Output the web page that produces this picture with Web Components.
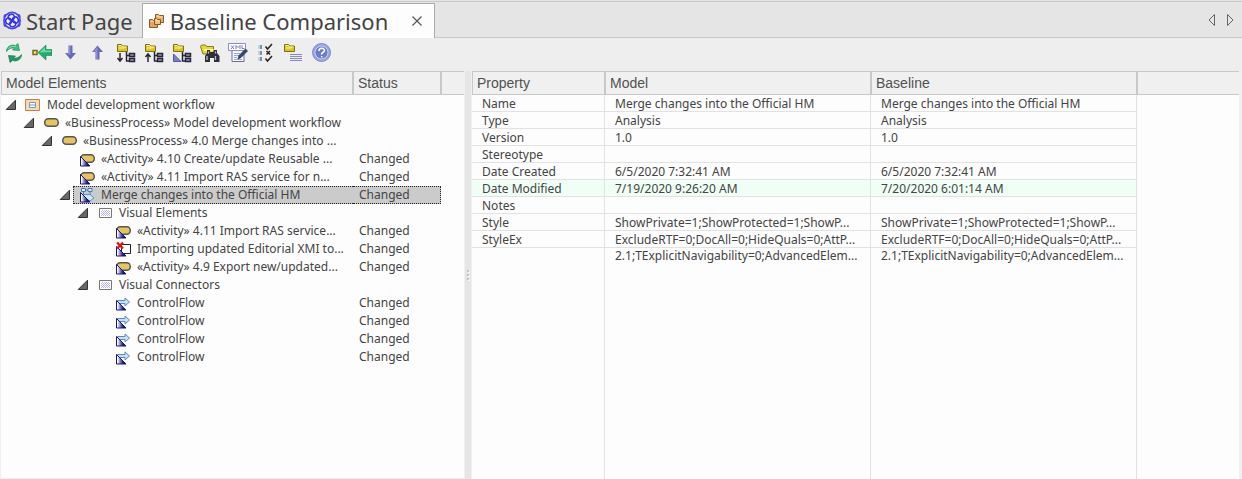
<!DOCTYPE html>
<html lang="en">
<head>
<meta charset="utf-8">
<title>Baseline Comparison</title>
<style>
  html, body { height: 100%; margin: 0; }
  body { background: #f0f0f0; color: #444; font: 12px/16px "Noto Sans", "Open Sans", sans-serif; }
</style>
</head>
<body>
<baseline-app></baseline-app>

<script>
const triangleBadge = `
  <defs><linearGradient id="fade"><stop offset=".1" stop-color="#fff"/><stop offset=".35" stop-color="#8f8fc8"/><stop offset=".7" stop-color="#16167a"/></linearGradient></defs>
  <path d="M1.500 5.500v9.500H11z" fill="url(#fade)" stroke="#16167a"/>`;
const pill = `<rect x="1.750" y="3.750" width="13.500" height="7.500" rx="3.500" fill="#e8c45c" stroke="#555" stroke-width="1.500"/>`;
const folder = `
  <path d="M1.500 1.500h4l1 1.500h5v5.500h-10z" fill="#dcc420" stroke="#7c7013"/>
  <path d="M2.500 2.500h3l1 1.500h4M2.500 5h6" fill="none" stroke="#fff59c"/>`;
const branches = `
  <path d="M10.500 9v9.500M10 12.500h4M10 18h4" fill="none" stroke="#25253a" stroke-width="1.500"/>
  <path d="M13.500 10.500h5v3h-5zM13.500 15.500h5v3h-5z" fill="#9a9aa8" stroke="#25253a" stroke-width="1.500"/>`;

const ICONS = {
  refresh: [20, `
    <path d="M2.500 8.500C2.500 4 6.500 1 11.500 2.500L14 .500 15.500 7.500 8.500 7l2-2C7.500 4.500 5 5.500 2.500 8.500z" fill="#3fbd7c" stroke="#168050" stroke-width=".6"/>
    <path d="M17.500 11.500C17.500 16 13.500 19 8.500 17.500L6 19.500 4.500 12.500 11.500 13l-2 2C12.500 15.500 15 14.500 17.500 11.500z" fill="#239a68" stroke="#0c6847" stroke-width=".6"/>
    <path d="M4.500 5.500C6.500 3.500 9 3 12 3.500" fill="none" stroke="#8be8b0"/>`],
  compare: [20, `
    <path d="M1 7.500h4v4H1z" fill="#f4ec7a" stroke="#77691a" stroke-width="1.500"/>
    <path d="M6 9.500L14 2v4.500h6v6h-6V17z" fill="#1fae6c" stroke="#15835a" stroke-width=".6"/>
    <path d="M7.500 9.500L13 4v3.500h6v1.500z" fill="#66dfa0"/>`],
  next: [20, `<path d="M8.500 2.500h4V10h3.500l-5.500 6.500L5 10h3.500z" fill="#6868b4"/><path d="M9 3h1.500v9L6 10.500h3z" fill="#8f8fd6"/>`],
  previous: [20, `<path d="M7.500 16.500h4V9H15L9.500 2.500 4 9h3.500z" fill="#6868b4"/><path d="M8 16h1.500V4L5 8.500h3z" fill="#8f8fd6"/>`],
  expandDown: [20, folder + branches + `<path d="M4 10v8M1.500 15L4 18l2.500-3" fill="none" stroke="#25253a" stroke-width="1.500"/>`],
  expandUp: [20, folder + branches + `<path d="M4 19v-8M1.500 14L4 11l2.500 3" fill="none" stroke="#25253a" stroke-width="1.500"/>`],
  expandChanged: [20, folder + branches + `<path d="M1.500 11v7.500H9z" fill="#8080c0" stroke="#5757a8"/>`],
  find: [20, `
    <path d="M.5 3.500l1-1.500h4l1 1.500h7V11H3z" fill="#e6d73b" stroke="#867a1c"/>
    <path d="M3.500 6h10v2h-9z" fill="#fff49b"/>
    <path d="M7 7h3v2h4V7h3v3l2.500 3v6h-5.500v-4h-4v4H5v-6l2-3z" fill="#30303d"/>
    <path d="M7 13v4M15.500 13v4M8.500 8.500v2M15.500 8.500v2" stroke="#c0c0d0" stroke-width="1.300"/>`],
  xml: [20, `
    <path d="M4 7h12v11.500H4z" fill="#f6f6ff" stroke="#6a6aa5"/>
    <path d="M.5.500h17v7H.500z" fill="#fff" stroke="#8c8cc4"/>
    <path d="M3 2.500l3 3.500m0-3.500L3 6M8 6V2.500l2 2 2-2V6M14 2v3.500h2.500" fill="none" stroke="#777bb5"/>
    <path d="M6 10.500h6M6 12.500h5M6 14.500h3M6 16.500h8" stroke="#9aa9d8"/>
    <path d="M10 16l1-3.500L17.500 6l2 2L13 14.500z" fill="#384679" stroke="#1e2648" stroke-width=".7"/>`],
  options: [20, `
    <path d="M2 2h4v4H2zM2 8h4v4H2zM2 14h4v4H2z" fill="#78909f"/><path d="M2 2h2v4H2zM2 8h2v4H2zM2 14h2v4H2z" fill="#b9d7e4"/>
    <path d="M9.500 3.500L11.500 6 16 1M9.500 15.500l2 2.500L16 13M10.500 8l3.500 3.500m0-3.500l-3.500 3.500" fill="none" stroke="#222" stroke-width="1.500"/>`],
  log: [20, `
    <path d="M.5 1.500h4l1 1.500h5v5.500H.5z" fill="#dcc420" stroke="#7c7013"/><path d="M1.500 2.500h3l1 1.500h4M1.500 5h6" fill="none" stroke="#fff59c"/>
    <path d="M6 11.500h12M6 13.500h12M6 15.500h12M6 17.500h12" stroke="#8787c5"/>`],
  help: [20, `
    <circle cx="9.500" cy="9.500" r="9" fill="#9aa4dd" stroke="#7e8bcc"/><circle cx="9.500" cy="9.500" r="6.500" fill="#6f7cc8" stroke="#c4cdf6"/>
    <path d="M7 8c0-3.500 5.500-3.500 5.500-.5 0 2-3 1.500-3 4" fill="none" stroke="#fff" stroke-width="1.500"/><path d="M9 13h1.500v1.500H9z" fill="#fff"/>`],
  start: [20, `
    <g fill="#4444f2"><circle cx="10" cy="9.500" r="9"/><circle cx="4" cy="5.500" r="2.500"/><circle cx="16" cy="5.500" r="2.500"/><circle cx="4" cy="13.500" r="2.500"/><circle cx="16" cy="13.500" r="2.500"/></g>
    <circle cx="10" cy="9.500" r="7.200" fill="#f4f4ff"/>
    <g fill="none" stroke="#3030ee" stroke-width="1.500">
      <path d="M10 9.500C5.500 9 5 4.500 8.500 3.500s6 3 1.500 6z"/><path d="M10 9.500C10.700 5.200 15.200 4.700 16.200 8.200s-3 6-6.200 1.300z"/>
      <path d="M10 9.500c4.500.7 5 5 1.500 6s-6-3-1.500-6z"/><path d="M10 9.500C9.300 14 4.800 14.500 3.800 11s3-6 6.200-1.500z"/>
    </g>`],
  baseline: [16, `
    <path d="M6.500 1.500h3l1 1h4v7h-8z" fill="#e5b26f" stroke="#8f5820"/><path d="M7.500 3h2l1 1h3" fill="none" stroke="#fde2b4"/>
    <path d="M.5 6.500h3l1 1h4v7h-8z" fill="#dfa660" stroke="#8f5820"/><path d="M1.500 8h2l1 1h3" fill="none" stroke="#fde2b4"/>
    <path d="M5.500 5.500h2l1 1h3v5h-6z" fill="#eec083" stroke="#8f5820"/><path d="M6.500 7h1l1 1h2" fill="none" stroke="#fde2b4"/>`],
  close: [12, `<path d="M1.500 1.500l9 9m0-9l-9 9" stroke="#555" stroke-width="1.200"/>`],
  left: [12, `<path d="M8.500.500v11L3 6z" fill="none" stroke="#666"/>`],
  right: [12, `<path d="M3.500.500v11L9 6z" fill="none" stroke="#666"/>`],
  toggle: [12, `<path d="M10.500 1.200V10.500H1.200z" fill="#686868" stroke="#333"/>`],
  diagram: [16, `<path d="M.5 2.500h14v11H.5z" fill="#fbd9b5" stroke="#bd8450"/><path d="M4.500 5.500h6v5h-6zM4.500 8h6" fill="#fff" stroke="#6f9cc0"/>`],
  pill: [16, pill],
  activity: [16, pill + triangleBadge],
  workflow: [16, `
    <path d="M2.500 1.500h4v3h-4zM9 1.500h4v3H9zM6.500 3H9M4.500 4.500v3M11 4.500v3" fill="#d8ecff" stroke="#4c74b8"/>
    <path d="M4 7.500h7l4 3.500-4 3-7-4z" fill="#cfe8ff" stroke="#5a8fd0"/>` + triangleBadge],
  group: [16, `
    <defs><pattern id="dots" width="2" height="2" patternUnits="userSpaceOnUse"><path d="M0 0h1v1H0zM1 1h1v1H1z" fill="#b9b9dc"/></pattern></defs>
    <path d="M2.500 3.500h12v9h-12z" fill="#fff" stroke="#777"/><path d="M4 5h9v6H4z" fill="url(#dots)"/>`],
  removed: [16, `<path d="M6.500 3.500h9v9h-9z" fill="#fff" stroke="#222"/>` + triangleBadge + `<path d="M2 1.500l6 6m0-6l-6 6" stroke="#d81919" stroke-width="2.400"/>`],
  flow: [16, `<path d="M2.500 5.500H10v-2.500L14.500 7l-4.500 4V8.500H2.500z" fill="#c4e0f8" stroke="#5d89bd"/>` + triangleBadge],
};

class UiIcon extends HTMLElement {
  connectedCallback() {
    const [size, art] = ICONS[this.getAttribute('name')];
    this.attachShadow({ mode: 'open' }).innerHTML = `
      <style>:host { display: block; flex: none; } svg { display: block; }</style>
      <svg width="${size}" height="${size}" viewBox="0 0 ${size} ${size}" aria-hidden="true">${art}</svg>`;
  }
}
customElements.define('ui-icon', UiIcon);

class TabItem extends HTMLElement {
  connectedCallback() {
    const active = this.hasAttribute('active');
    this.attachShadow({ mode: 'open' }).innerHTML = `
      <style>
        :host { display: flex; align-items: center; box-sizing: border-box; height: 35px; border: 1px solid transparent; border-bottom: 0; }
        :host([active]) { background: #fdfdfd; border-color: #aaa; padding: 0 3px 0 0; }
        button { display: flex; align-items: center; gap: 4px; border: 0; margin: 0; padding: 0 8px 0 1px; background: none; color: inherit; font: inherit; }
        :host([active]) .tab { padding: 0 15px 0 6px; gap: 5px; }
        :host([active]) .close { padding: 8px; }
      </style>
      <button class="tab" role="tab" aria-selected="${active}"><ui-icon name="${this.getAttribute('icon')}"></ui-icon><span><slot></slot></span></button>
      ${active ? '<button class="close" aria-label="Close tab"><ui-icon name="close"></ui-icon></button>' : ''}`;
  }
}
customElements.define('tab-item', TabItem);

class TabStrip extends HTMLElement {
  connectedCallback() {
    this.attachShadow({ mode: 'open' }).innerHTML = `
      <style>
        :host { display: flex; align-items: flex-end; box-sizing: border-box; height: 38px; background: linear-gradient(#c8c8c8, #c8c8c8) 0 100% / 100% 1px no-repeat, linear-gradient(#c8c8c8, #c8c8c8) 0 1px / 100% 1px no-repeat, #e5e5e5; font-size: 22px; line-height: 32px; }
        nav { display: flex; gap: 6px; margin-left: auto; padding: 0 6px 12px 0; }
        button { border: 0; margin: 0; padding: 0; background: none; }
      </style>
      <slot></slot>
      <nav aria-label="Scroll tabs"><button aria-label="Previous tab"><ui-icon name="left"></ui-icon></button><button aria-label="Next tab"><ui-icon name="right"></ui-icon></button></nav>`;
  }
}
customElements.define('tab-strip', TabStrip);

class ToolBar extends HTMLElement {
  connectedCallback() {
    const tools = { refresh: 'Refresh', compare: 'Merge from baseline', next: 'Next change', previous: 'Previous change', expandDown: 'Expand all', expandUp: 'Collapse all', expandChanged: 'Expand changed', find: 'Find in project', xml: 'Log to XML', options: 'Compare options', log: 'View log', help: 'Help' };
    this.attachShadow({ mode: 'open' }).innerHTML = `
      <style>
        :host { display: flex; box-sizing: border-box; height: 33px; padding-top: 5px; background: #eee; }
        button { display: block; border: 0; margin: 0; padding: 0 4px; height: 20px; background: none; }
      </style>
      ${Object.entries(tools).map(([icon, label]) => `<button aria-label="${label}"><ui-icon name="${icon}"></ui-icon></button>`).join('')}`;
  }
}
customElements.define('tool-bar', ToolBar);

const TABLE_STYLE = `
  table { width: 100%; table-layout: fixed; border-collapse: separate; border-spacing: 0; }
  th { box-sizing: border-box; height: 24px; padding: 0 4px; border: 1px solid #c8c8c8; background: #f0f0f0; color: #505050; text-align: left; font: 14px/20px "Liberation Sans", Arial, sans-serif; }
  th:last-child { border-right: 0; }
  td { box-sizing: border-box; padding: 0; white-space: nowrap; overflow: hidden; }`;

class ModelTree extends HTMLElement {
  connectedCallback() {
    const C = 'Changed';
    const rows = [
      [0, 'diagram', 'Model development workflow', '', 1],
      [1, 'pill', '«BusinessProcess» Model development workflow', '', 1],
      [2, 'pill', '«BusinessProcess» 4.0 Merge changes into ...', '', 1],
      [3, 'activity', '«Activity» 4.10 Create/update Reusable ...', C],
      [3, 'activity', '«Activity» 4.11 Import RAS service for n...', C],
      [3, 'workflow', 'Merge changes into the Official HM', C, 1, 1],
      [4, 'group', 'Visual Elements', '', 1],
      [5, 'activity', '«Activity» 4.11 Import RAS service...', C],
      [5, 'removed', 'Importing updated Editorial XMI to...', C],
      [5, 'activity', '«Activity» 4.9 Export new/updated...', C],
      [4, 'group', 'Visual Connectors', '', 1],
      [5, 'flow', 'ControlFlow', C], [5, 'flow', 'ControlFlow', C], [5, 'flow', 'ControlFlow', C], [5, 'flow', 'ControlFlow', C],
    ];
    this.attachShadow({ mode: 'open' }).innerHTML = `
      <style>
        :host { display: block; box-sizing: border-box; background: #fdfdfd; border-bottom: 1px solid #eee; overflow: hidden; }
        ${TABLE_STYLE}
        .name { width: 352px; } .status { width: 88px; }
        tbody::before { content: ""; display: table-row; height: 1px; }
        td { height: 18px; line-height: 16px; }
        td + td { padding-left: 6px; }
        .node { display: flex; gap: 2px; height: 18px; align-items: center; padding-left: calc(4px + 18px * var(--level)); }
        .toggle { flex: none; width: 12px; height: 12px; border: 0; margin: 0; padding: 0; background: none; }
        .label { display: flex; flex: 1; align-items: center; gap: 6px; height: 16px; padding-left: 5px; border: 1px solid transparent; border-right: 0; }
        .selected .label { background: #cbcbcb; border: 1px dotted #222; border-right: 0; }
        .selected .state { background: #cbcbcb; border: 1px dotted #222; border-left: 0; }
      </style>
      <table role="treegrid">
        <colgroup><col class="name"><col class="status"><col></colgroup>
        <thead><tr><th>Model Elements</th><th>Status</th><th></th></tr></thead>
        <tbody>${rows.map(([level, icon, text, status, open, selected]) => `
          <tr aria-level="${level + 1}"${selected ? ' class="selected" aria-selected="true"' : ''}>
            <td><div class="node" style="--level:${level}">${open ? '<button class="toggle" aria-label="Collapse"><ui-icon name="toggle"></ui-icon></button>' : '<span class="toggle"></span>'}<div class="label"><ui-icon name="${icon}"></ui-icon><span>${text}</span></div></div></td>
            <td class="state">${status}</td><td></td>
          </tr>`).join('')}
        </tbody>
      </table>`;
  }
}
customElements.define('model-tree', ModelTree);

class SplitBar extends HTMLElement {
  connectedCallback() {
    this.attachShadow({ mode: 'open' }).innerHTML = `
      <style>
        :host { display: flex; flex-direction: column; align-items: center; justify-content: center; gap: 2px; box-sizing: border-box; width: 8px; background: #e5e5e5; border: solid #f0f0f0; border-width: 0 1px; }
        i { width: 2px; height: 2px; background: #c4c4c4; box-shadow: 1px 1px #fafafa; }
      </style><i></i><i></i><i></i>`;
  }
}
customElements.define('split-bar', SplitBar);

class PropertyTable extends HTMLElement {
  connectedCallback() {
    const name = 'Merge changes into the Official HM';
    const style = 'ShowPrivate=1;ShowProtected=1;ShowP...';
    const styleEx = 'ExcludeRTF=0;DocAll=0;HideQuals=0;AttP...';
    const more = '2.1;TExplicitNavigability=0;AdvancedElem...';
    const rows = [
      ['Name', name, name], ['Type', 'Analysis', 'Analysis'], ['Version', '1.0', '1.0'], ['Stereotype', '', ''],
      ['Date Created', '6/5/2020 7:32:41 AM', '6/5/2020 7:32:41 AM'],
      ['Date Modified', '7/19/2020 9:26:20 AM', '7/20/2020 6:01:14 AM', 'differs'],
      ['Notes', '', ''], ['Style', style, style], ['StyleEx', styleEx, styleEx], ['', more, more, 'continued'],
    ];
    this.attachShadow({ mode: 'open' }).innerHTML = `
      <style>
        :host { display: block; background: #fdfdfd; overflow: hidden; }
        ${TABLE_STYLE}
        table { height: 100%; }
        .property { width: 133px; } .value { width: 266px; }
        td { height: 17px; padding: 2px 0 0 10px; line-height: 14px; vertical-align: top; border: solid #e2e2e2; border-width: 0 1px 1px 0; }
        td:last-child { border: 0; }
        .differs td:not(:last-child) { background: #effff5; }
        .continued td { padding-top: 0; line-height: 16px; }
        .continued td, .rest td { border-bottom: 0; }
        .rest td { height: auto; }
      </style>
      <table>
        <colgroup><col class="property"><col class="value"><col class="value"><col></colgroup>
        <thead><tr><th>Property</th><th>Model</th><th>Baseline</th><th></th></tr></thead>
        <tbody>${rows.map(([key, model, baseline, kind = '']) => `
          <tr class="${kind}"><td>${key}</td><td>${model}</td><td>${baseline}</td><td></td></tr>`).join('')}
          <tr class="rest"><td></td><td></td><td></td><td></td></tr>
        </tbody>
      </table>`;
  }
}
customElements.define('property-table', PropertyTable);

class BaselineApp extends HTMLElement {
  connectedCallback() {
    this.attachShadow({ mode: 'open' }).innerHTML = `
      <style>
        :host { display: flex; flex-direction: column; height: 100%; }
        main { display: flex; flex: 1; min-height: 0; padding: 0 3px 0 1px; }
        model-tree { flex: 463 1 0; min-width: 0; }
        split-bar { flex: none; }
        property-table { flex: 767 1 0; min-width: 0; }
      </style>
      <tab-strip><tab-item icon="start">Start Page</tab-item><tab-item icon="baseline" active>Baseline Comparison</tab-item></tab-strip>
      <tool-bar></tool-bar>
      <main><model-tree></model-tree><split-bar></split-bar><property-table></property-table></main>`;
  }
}
customElements.define('baseline-app', BaselineApp);
</script>
</body>
</html>
